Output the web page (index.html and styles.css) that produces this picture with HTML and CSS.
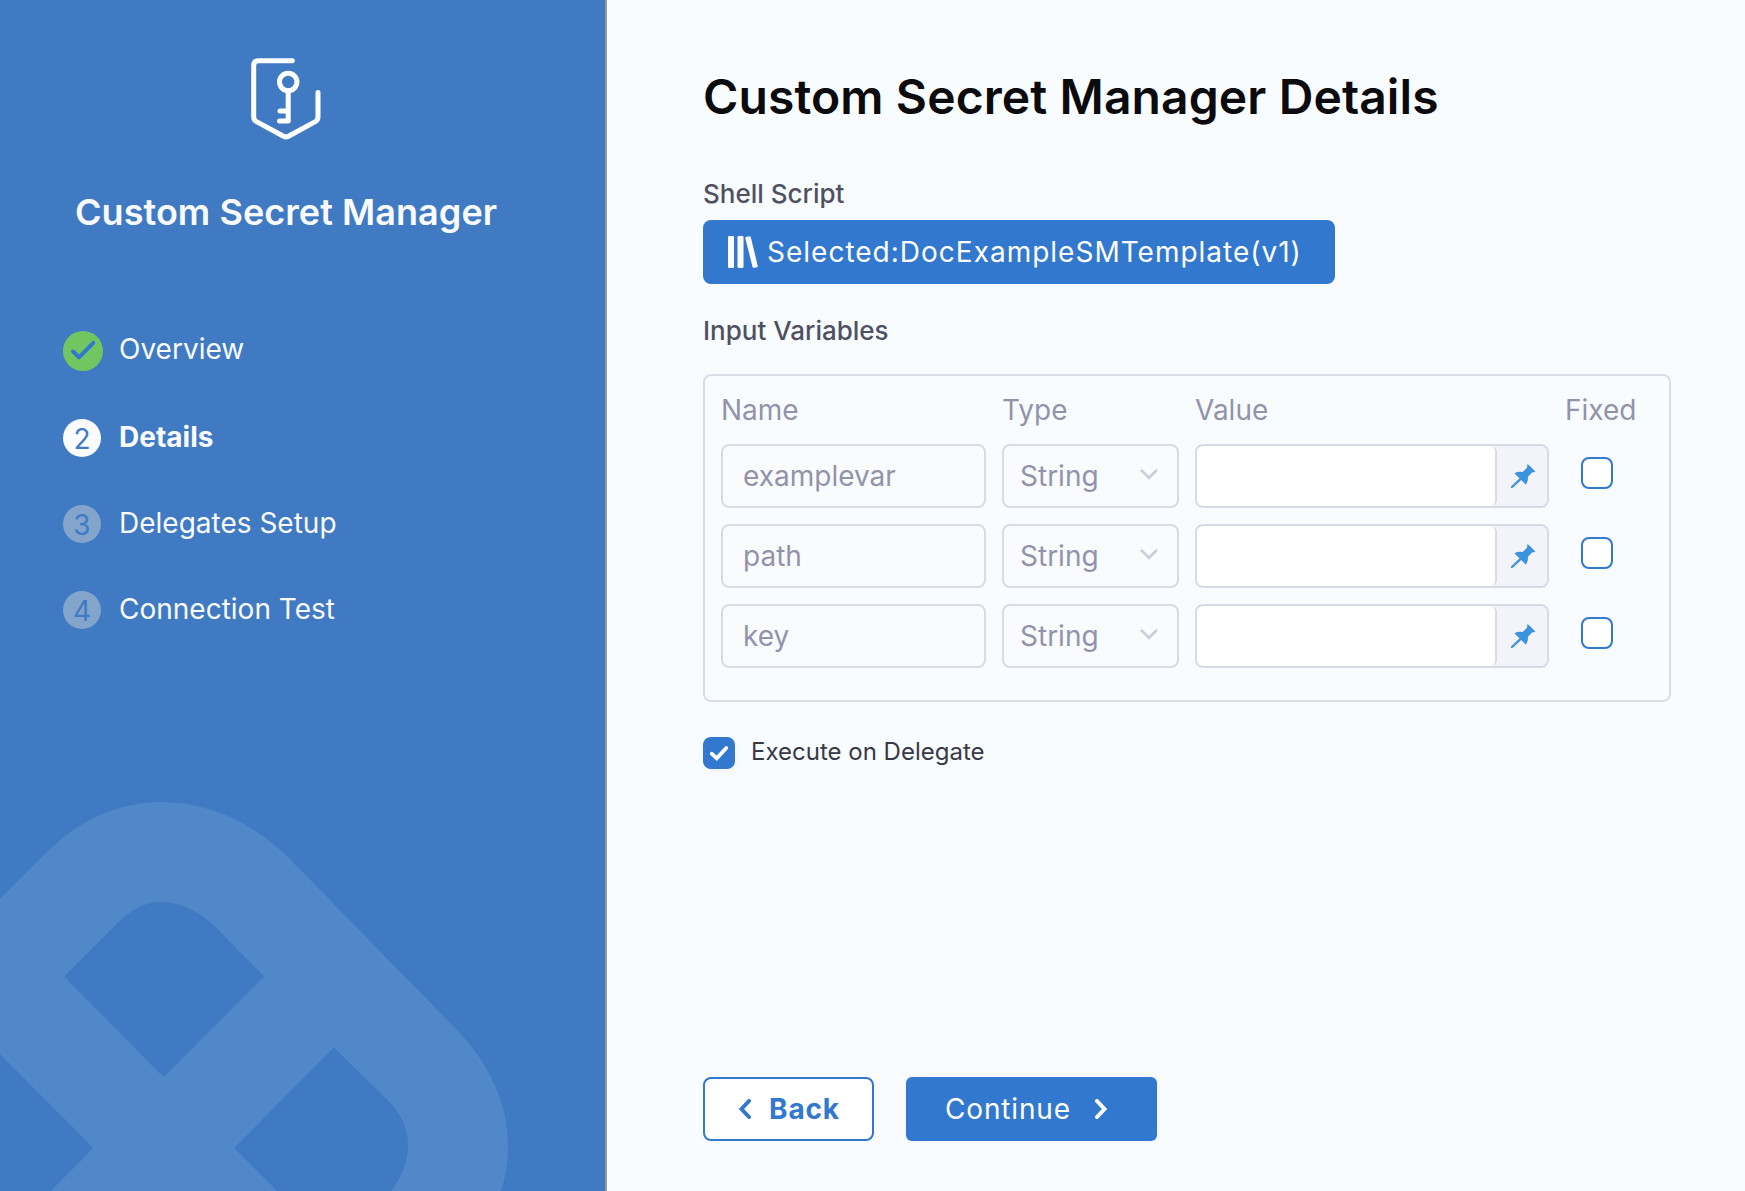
FILE: index.html
```html
<!DOCTYPE html>
<html lang="en">
<head>
<meta charset="utf-8">
<title>Custom Secret Manager</title>
<link rel="stylesheet" href="styles.css">
</head>
<body>
<svg class="defs" width="0" height="0" aria-hidden="true">
  <symbol id="pin" viewBox="0 0 25 24"><path d="M16.700 0 24.400 7.400Q23 8.500 21.300 8.200L17.200 12.500Q17.200 17 15 20.700L10.200 16 1.500 24H0V22.500L8.500 14.200 3.500 9.300Q6.500 7.300 11.700 8L16.200 3.500Q15.900 1.500 16.700 0Z"/></symbol>
  <symbol id="chevron-down" viewBox="0 0 18 11"><path d="M1.8 1.8 9 8.800l7.200-7" fill="none" stroke="currentColor" stroke-width="2.900" stroke-linecap="round" stroke-linejoin="miter"/></symbol>
</svg>
<div class="wizard">
  <aside class="sidebar">
    <svg class="watermark" viewBox="0 0 605 411" aria-hidden="true">
      <path fill-rule="evenodd" d="M0 119 45 74C82 37 122 22 162 22c44 0 89 19 126 55L455 248c35 35 53 77 53 117 0 16-2 31-7 46H0ZM64 196.500 115.500 145C130 130 145 122 161 122c17 0 36 8 52.500 23L264 196.500 163.700 297ZM334 267.500 387.500 320C401 333 408 348 408 365c0 15-5 31-17 46H277L234 368ZM0 274 93 368 51 411H0Z"/>
    </svg>
    <svg class="logo" viewBox="0 0 70 82" aria-hidden="true">
      <g fill="none" stroke="#fff" stroke-width="5" stroke-linecap="round" stroke-linejoin="round">
        <path d="M41.300 2.800H7.500Q2.700 2.800 2.700 7.600V59Q2.700 62 5.500 63.600L32.500 78.200Q35 79.600 37.500 78.200L64.300 63.600Q67 62 67 59V34.500"/>
        <circle cx="37.200" cy="24" r="8.700"/>
        <path d="M37.200 33V63H28.500M37.200 53H29"/>
      </g>
    </svg>
    <h2 class="sidebar-title">Custom Secret Manager</h2>
    <ol class="steps">
      <li class="step done"><span class="badge"><svg viewBox="0 0 40 40"><path d="M10 20.500 16 26.300 30.300 11.900" fill="none" stroke="currentColor" stroke-width="4" stroke-linecap="round" stroke-linejoin="round"/></svg></span><span class="step-name">Overview</span></li>
      <li class="step current"><span class="badge">2</span><span class="step-name">Details</span></li>
      <li class="step"><span class="badge">3</span><span class="step-name">Delegates Setup</span></li>
      <li class="step"><span class="badge">4</span><span class="step-name">Connection Test</span></li>
    </ol>
  </aside>
  <main class="content">
    <h1 class="title">Custom Secret Manager Details</h1>
    <div class="label">Shell Script</div>
    <button class="template-btn"><svg class="library" viewBox="0 0 30 32"><path d="M0 1.200Q0 0 1.200 0H4.800Q6 0 6 1.200V30.800Q6 32 4.800 32H1.200Q0 32 0 30.800ZM9.500 1.200Q9.500 0 10.700 0H14.300Q15.500 0 15.500 1.200V30.800Q15.500 32 14.300 32H10.700Q9.500 32 9.500 30.800ZM17.300 2.300Q17 1.100 18.200.9L21.300.3Q22.500 0 22.800 1.200L29.700 29.700Q30 30.900 28.800 31.200L26.200 31.800Q24.900 32 24.600 30.900Z" fill="#fff"/></svg><span>Selected:DocExampleSMTemplate(v1)</span></button>
    <div class="label">Input Variables</div>
    <section class="variables">
      <div class="row head"><span>Name</span><span>Type</span><span>Value</span><span>Fixed</span></div>
      <div class="row"><div class="field">examplevar</div><div class="field select"><span>String</span><svg class="caret"><use href="#chevron-down"/></svg></div><div class="value"><div class="value-input"></div><svg class="pin"><use href="#pin"/></svg></div><span class="check"></span></div>
      <div class="row"><div class="field">path</div><div class="field select"><span>String</span><svg class="caret"><use href="#chevron-down"/></svg></div><div class="value"><div class="value-input"></div><svg class="pin"><use href="#pin"/></svg></div><span class="check"></span></div>
      <div class="row"><div class="field">key</div><div class="field select"><span>String</span><svg class="caret"><use href="#chevron-down"/></svg></div><div class="value"><div class="value-input"></div><svg class="pin"><use href="#pin"/></svg></div><span class="check"></span></div>
    </section>
    <div class="delegate"><span class="check checked"><svg viewBox="0 0 32 32"><path d="M8.700 16.700 13.700 21.300 23.300 11" fill="none" stroke="#fff" stroke-width="3.800" stroke-linecap="round"/></svg></span><span class="delegate-text">Execute on Delegate</span></div>
    <footer class="actions">
      <button class="btn back"><svg viewBox="0 0 12 20"><path d="M10 2 2.500 10 10 18" fill="none" stroke="currentColor" stroke-width="4" stroke-linecap="round"/></svg><span>Back</span></button>
      <button class="btn continue"><span>Continue</span><svg viewBox="0 0 12 20"><path d="M2 2 9.500 10 2 18" fill="none" stroke="currentColor" stroke-width="4" stroke-linecap="round"/></svg></button>
    </footer>
  </main>
</div>
</body>
</html>
```
FILE: styles.css
```css
* { box-sizing: border-box; }
body { margin: 0; font-family: Inter, sans-serif; font-size: 28px; background: #f9fcff; }
.defs { position: absolute; }
svg { display: block; flex: none; }
.wizard { display: flex; width: 1745px; height: 1191px; overflow: hidden; }

.sidebar { position: relative; width: 607px; flex: none; padding-top: 58px; background: #3f7ac3; border-right: 2px solid #9b999f; color: #fafbfe; }
.watermark { position: absolute; left: 0; bottom: 0; width: 605px; height: 411px; fill: #5188c9; }
.logo { width: 70px; height: 82px; margin-left: 251px; }
.sidebar-title { margin: 50px 0 0 75px; font-size: 36px; line-height: 44px; font-weight: 600; letter-spacing: .05px; white-space: nowrap; }
.steps { list-style: none; margin: 97px 0 0; padding: 0 0 0 63px; }
.step { display: flex; align-items: center; height: 38px; margin-bottom: 48px; }
.step.done { height: 40px; }
.badge { width: 38px; height: 38px; margin-right: 18px; border-radius: 50%; background: #83a5cb; color: #3f7ac3; text-align: center; line-height: 40px; font-size: 28px; }
.done .badge { width: 40px; height: 40px; margin-right: 16px; background: #71c661; color: #3278cf; }
.current .badge { background: #fafcff; }
.step-name { line-height: 34px; margin-top: -3px; }
.done .step-name { margin-top: -5px; }
.current .step-name { font-weight: 700; }

.content { flex: 1; display: flex; flex-direction: column; align-items: flex-start; padding: 67px 0 50px 96px; }
.title { margin: 0; font-size: 48px; line-height: 60px; font-weight: 600; letter-spacing: .1px; color: #0b0b0d; white-space: nowrap; }
.label { font-size: 26px; line-height: 32px; font-weight: 500; color: #4f5162; margin-top: 51px; }
button { font: inherit; border: 0; margin: 0; padding: 0; display: flex; align-items: center; white-space: nowrap; }
.template-btn { width: 632px; height: 64px; margin-top: 10px; padding-left: 25px; border-radius: 8px; background: #3278cf; color: #fff; letter-spacing: 1px; }
.library { width: 30px; height: 32px; margin-right: 9px; }
.template-btn + .label { margin-top: 31px; }

.variables { width: 968px; height: 328px; margin-top: 27px; padding: 17px 16px; border: 2px solid #dcdce6; border-radius: 8px; color: #9293ab; }
.row { display: grid; grid-template-columns: 265px 177px 354px 1fr; column-gap: 16px; height: 64px; margin-bottom: 16px; align-items: center; }
.row.head { height: 34px; margin: 0 0 17px; line-height: 34px; }
.field { height: 64px; padding: 0 20px; border: 2px solid #d9dae6; border-radius: 8px; background: #fafbfd; line-height: 60px; }
.select { display: flex; align-items: center; justify-content: space-between; padding: 0 19px 0 16px; }
.caret { width: 18px; height: 11px; margin-top: -4px; color: #ceced8; }
.value { display: flex; align-items: center; height: 64px; border: 2px solid #d9dae6; border-radius: 8px; background: #f3f3fa; overflow: hidden; }
.value-input { width: 300px; height: 60px; background: #fff; border-right: 2px solid #d9dae6; border-radius: 6px; }
.pin { width: 25px; height: 24px; margin-left: 14px; fill: #3d92df; }
.check { display: block; width: 32px; height: 32px; border: 2px solid #3278cf; border-radius: 8px; background: #fff; }
.row .check { margin: -6px 0 0 16px; }

.delegate { display: flex; align-items: center; margin-top: 35px; }
.checked { border: 0; background: #3278cf; box-shadow: 0 2px 6px rgba(50, 60, 90, .05); }
.checked svg { width: 32px; height: 32px; }
.delegate-text { margin: -3px 0 0 16px; font-size: 24px; line-height: 30px; color: #383946; }

.actions { display: flex; gap: 32px; margin-top: auto; }
.btn { height: 64px; letter-spacing: .85px; }
.btn svg { width: 12px; height: 20px; }
.back { width: 171px; padding-left: 34px; border: 2px solid #3278cf; border-radius: 8px; background: #fff; color: #3278cf; font-weight: 700; }
.back span { margin-left: 18px; }
.continue { width: 251px; padding-left: 39px; border-radius: 6px; background: #3278cf; color: #fff; box-shadow: 0 0 4px rgba(90, 70, 140, .08); }
.continue svg { margin-left: 24px; }
```
